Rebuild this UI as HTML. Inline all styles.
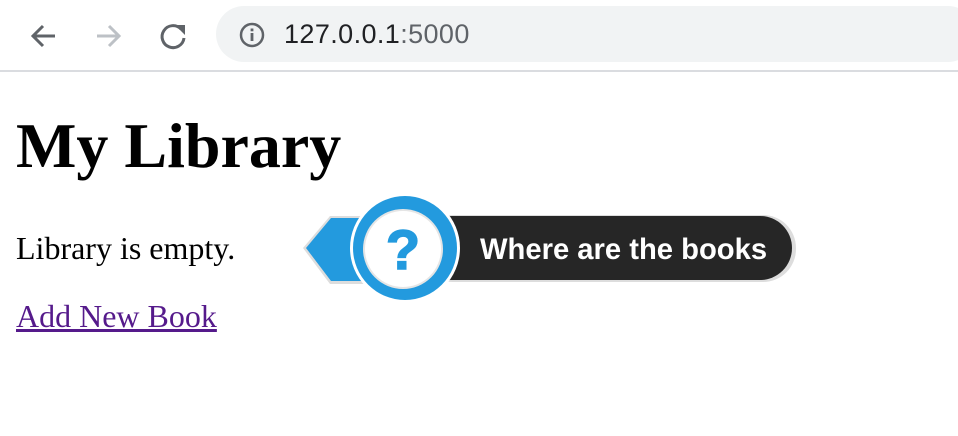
<!DOCTYPE html>
<html><head><meta charset="utf-8"><style>
body{margin:0;width:958px;height:436px;background:#fff;position:relative;overflow:hidden;font-family:"Liberation Serif",serif}
.bar{position:absolute;left:0;top:0;width:958px;height:70px;background:#fff;border-bottom:2px solid #dadce0}
.url{position:absolute;left:216px;top:6px;width:760px;height:56px;border-radius:28px;background:#f1f3f4}
.urltext{position:absolute;left:284px;top:19px;font:27px "Liberation Sans",sans-serif;color:#202124;letter-spacing:0.4px}
.urltext span{color:#5f6368}
.t{position:absolute;white-space:nowrap;line-height:1}
</style></head><body>
<div class="bar">
<svg style="position:absolute;left:28px;top:20px" width="32" height="32" viewBox="0 0 32 32"><path d="M27 16H6M15 6L5 16l10 10" fill="none" stroke="#5f6368" stroke-width="3"/></svg>
<svg style="position:absolute;left:92px;top:20px" width="32" height="32" viewBox="0 0 32 32"><path d="M5 16h21M17 6l10 10-10 10" fill="none" stroke="#bdc1c6" stroke-width="3"/></svg>
<svg style="position:absolute;left:156px;top:19px" width="34" height="34" viewBox="0 0 34 34"><path d="M25 10A11 11 0 1 0 28 19" fill="none" stroke="#5f6368" stroke-width="3"/><path d="M19 6h10v10z" fill="#5f6368"/></svg>
<div class="url"></div>
<svg style="position:absolute;left:238px;top:21px" width="28" height="28" viewBox="0 0 28 28"><circle cx="14" cy="14" r="11" fill="none" stroke="#5f6368" stroke-width="2.5"/><rect x="12.6" y="12" width="2.8" height="8" fill="#5f6368"/><rect x="12.6" y="7.5" width="2.8" height="2.8" fill="#5f6368"/></svg>
<div class="urltext">127.0.0.1<span>:5000</span></div>
</div>
<div class="t" style="left:16px;top:114px;font-size:64px;font-weight:bold">My Library</div>
<div class="t" style="left:16px;top:232px;font-size:32px">Library is empty.</div>
<div class="t" style="left:16px;top:300px;font-size:32px;color:#551a8b;text-decoration:underline">Add New Book</div>
<svg style="position:absolute;left:0;top:0" width="958" height="436">
<rect x="420" y="215" width="376" height="67" rx="33" fill="#ddd"/>
<rect x="420" y="216" width="372" height="64" rx="32" fill="#262626"/>
<polygon points="303,248 330,216 380,216 380,284 330,284" fill="#ddd"/>
<polygon points="306,248 331,218 380,218 380,281 331,281" fill="#239ade"/>
<circle cx="405" cy="248" r="55" fill="#fff"/>
<circle cx="405" cy="248" r="52" fill="#239ade"/>
<circle cx="403" cy="249" r="40" fill="#e5e5e5"/>
<circle cx="403" cy="249" r="38" fill="#fff"/>
<text x="403" y="269" text-anchor="middle" font-family="Liberation Sans,sans-serif" font-weight="bold" font-size="56" fill="#239ade" stroke="#239ade" stroke-width="1.5">?</text>
<text x="480" y="259" font-family="Liberation Sans,sans-serif" font-weight="bold" font-size="29.2" fill="#fff">Where are the books</text>
</svg>
</body></html>
